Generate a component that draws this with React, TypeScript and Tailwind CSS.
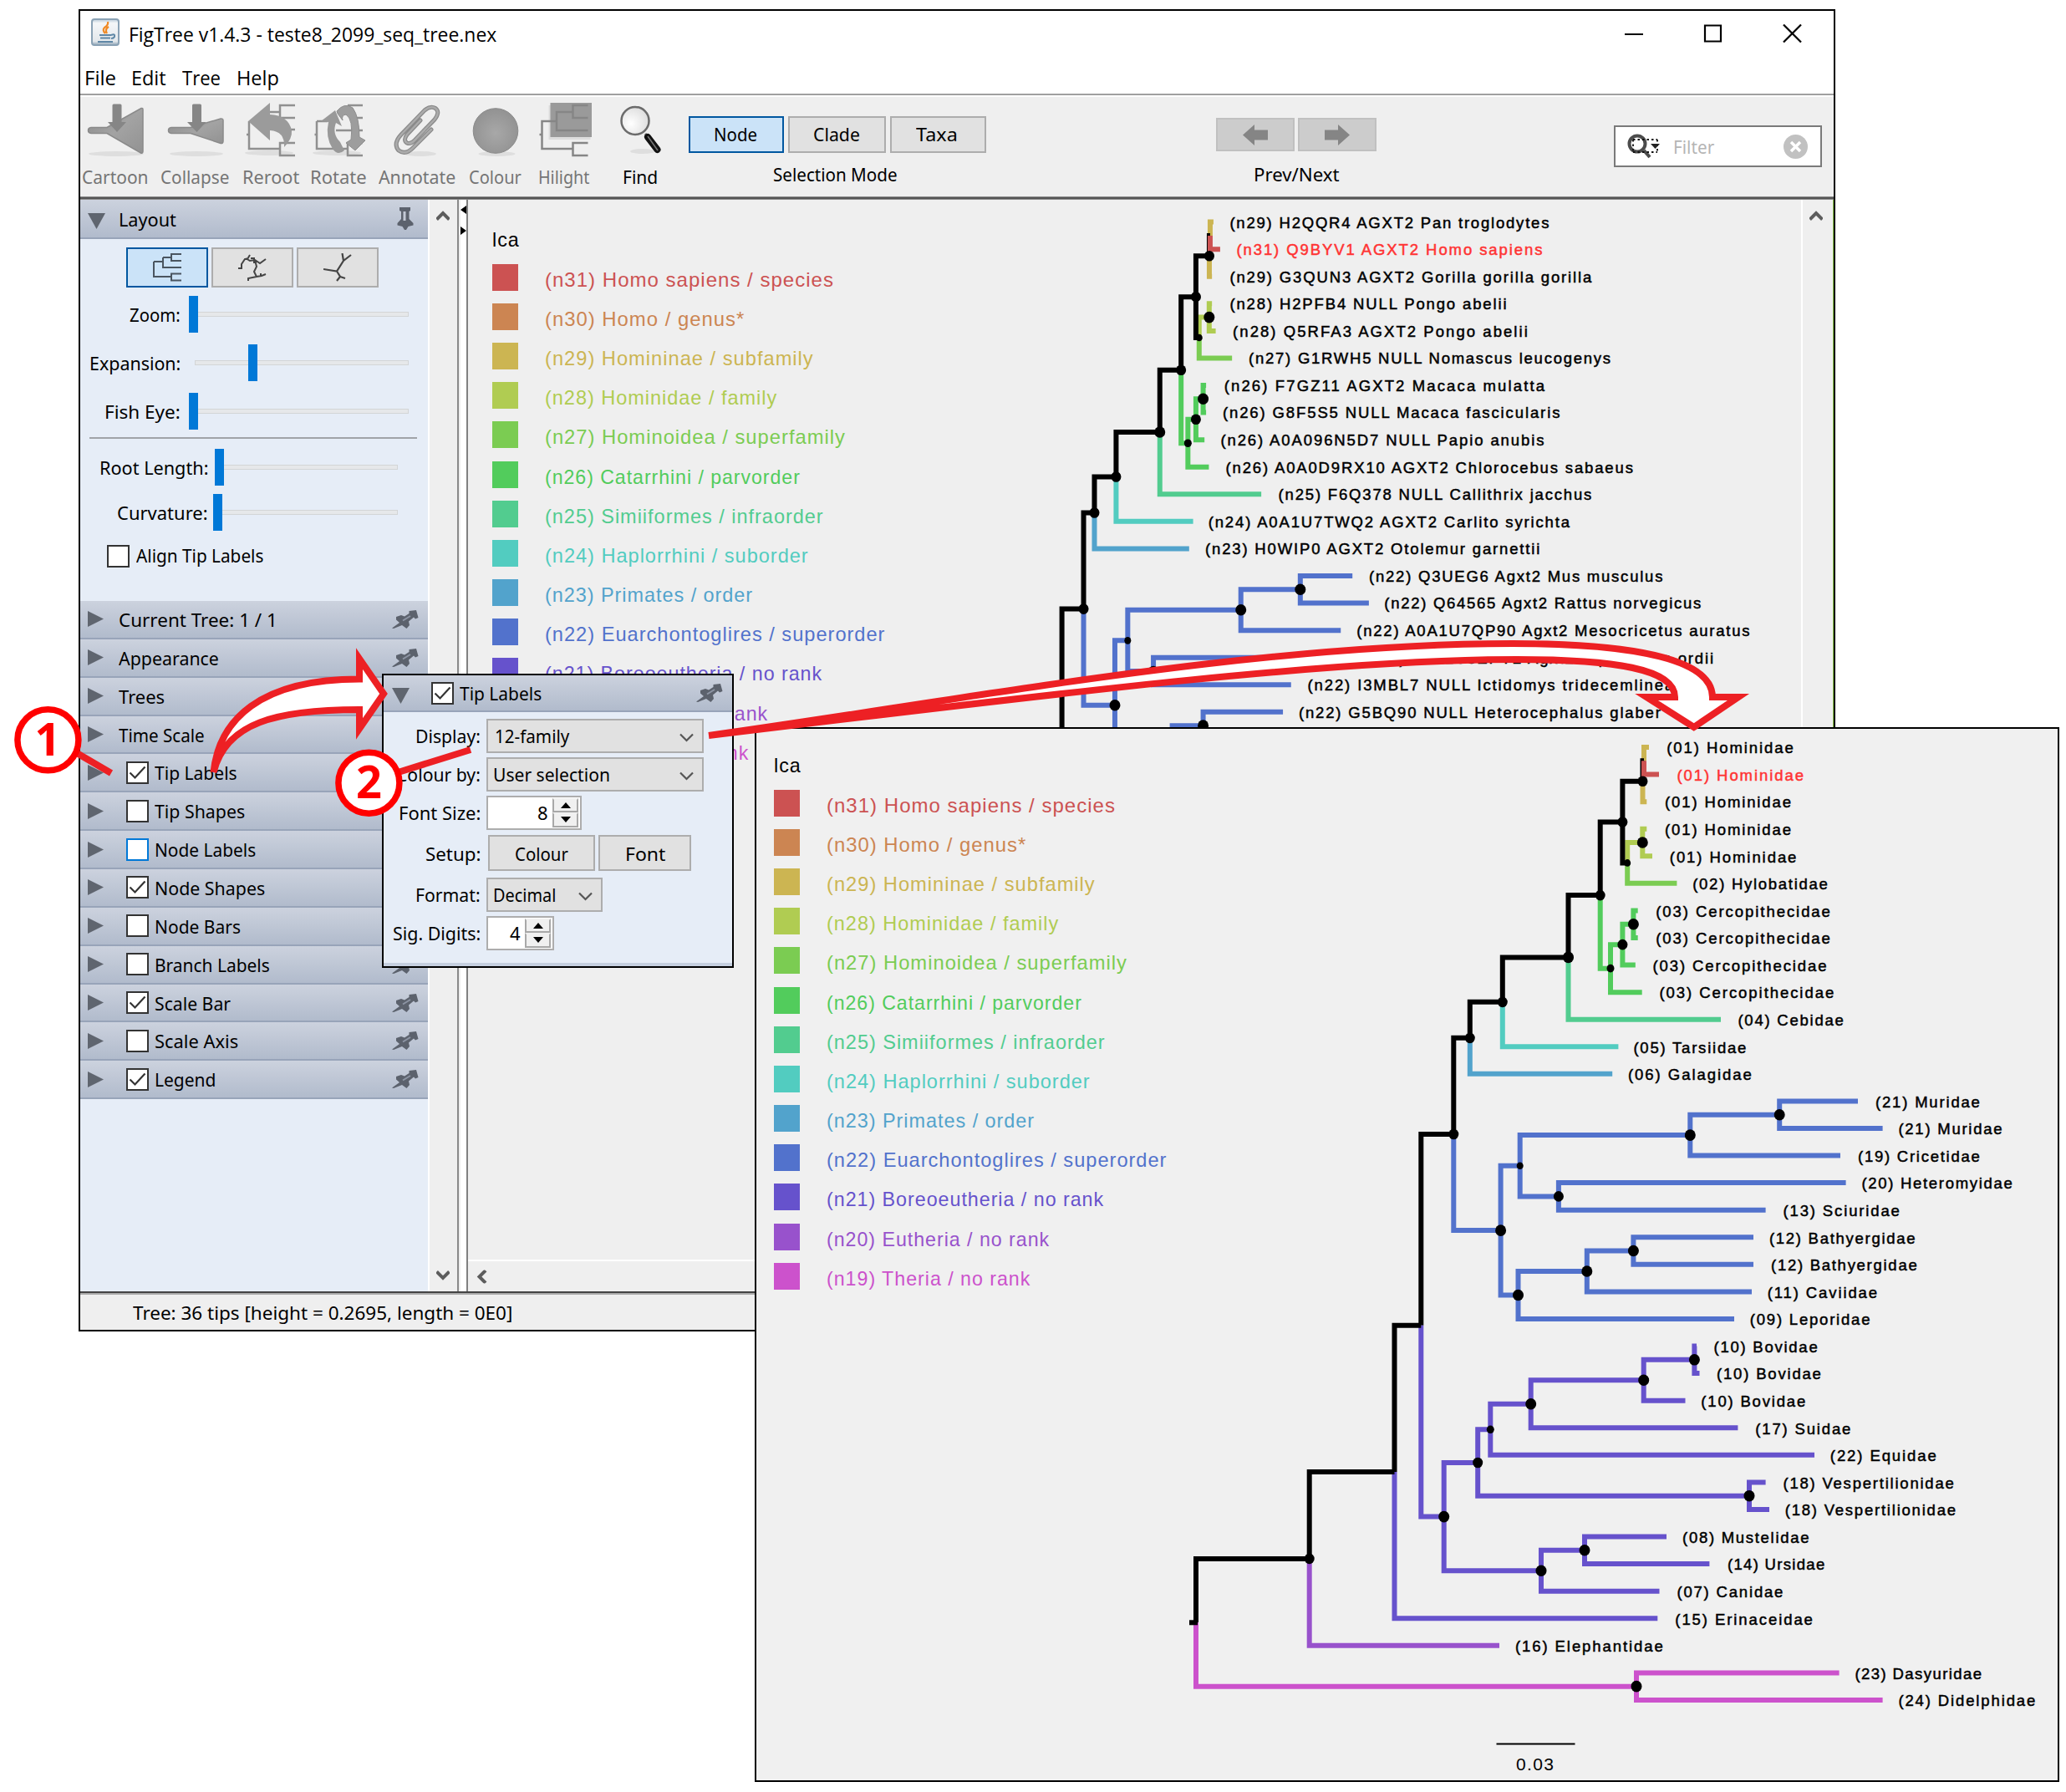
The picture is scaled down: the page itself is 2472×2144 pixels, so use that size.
import React, { useLayoutEffect, useRef, useState } from "react";

/* ---------- text squeezed or stretched to a given width ---------- */

function Fit({ w, className = "", children }: { w: number; className?: string; children: string }) {
  const ref = useRef<HTMLSpanElement>(null);
  const [scale, setScale] = useState(1);
  useLayoutEffect(() => {
    if (ref.current) setScale(w / ref.current.offsetWidth);
  }, [w]);
  return (
    <span className={"inline-block shrink-0 whitespace-nowrap text-left " + className} style={{ width: w }}>
      <span ref={ref} className="inline-block origin-left" style={{ transform: `scaleX(${scale})` }}>
        {children}
      </span>
    </span>
  );
}

/* ---------- phylogenetic tree ---------- */

const C: Record<string, string> = {
  n31: "#cc5252",
  n30: "#cc8552",
  n29: "#ccb552",
  n28: "#b0cc52",
  n27: "#7bcc52",
  n26: "#52cc5c",
  n25: "#52cc8f",
  n24: "#52ccc0",
  n23: "#52a3cc",
  n22: "#5272cc",
  n21: "#6652cc",
  n20: "#9852cc",
  n19: "#cc52cc",
};

type Tree = { x: number; c: string; r?: number; kids?: Tree[]; front?: boolean };
const tip = (c: string, x: number, front = false): Tree => ({ x, c: C[c], front });
const node = (c: string, x: number, r: number, ...kids: Tree[]): Tree => ({ x, c: C[c] ?? "#000", r, kids });

const TREE: Tree = node("k", 1431, 0,
  node("k", 1566.7, 6,
    node("k", 1668.5, 0,
      node("k", 1700.3, 0,
        node("k", 1739.3, 6,
          node("k", 1758.8, 6,
            node("k", 1797.8, 6,
              node("k", 1876.5, 6.5,
                node("k", 1914.7, 6,
                  node("k", 1941.4, 6,
                    node("k", 1965.5, 6,
                      node("k", 1967, 0, tip("n29", 1973), tip("n31", 1985, true)),
                      tip("n29", 1970.3)),
                    node("k", 1947.2, 4,
                      node("n28", 1965.3, 6.5, tip("n28", 1970.3), tip("n28", 1977)),
                      tip("n27", 2006.4))),
                  node("n26", 1927, 4.5,
                    node("n26", 1941.4, 6,
                      node("n26", 1954.4, 6.5, tip("n26", 1959.7), tip("n26", 1959.7)),
                      tip("n26", 1956.8)),
                    tip("n26", 1964.7))),
                tip("n25", 2059)),
              tip("n24", 1936.4)),
            tip("n23", 1929.2)),
          node("n22", 1795.6, 6.5,
            node("n22", 1818.7, 4,
              node("n22", 2022.3, 6.5,
                node("n22", 2129.2, 6.5, tip("n22", 2223), tip("n22", 2252.6)),
                tip("n22", 2202)),
              node("n22", 1864.9, 6, tip("n22", 2208.6), tip("n22", 2112.6))),
            node("n22", 1816.5, 6.5,
              node("n22", 1898.8, 6.5,
                node("n22", 1954.4, 6.5, tip("n22", 2098), tip("n22", 2098)),
                tip("n22", 2096)),
              tip("n22", 2075)))),
        node("n21", 1727.7, 6.5,
          node("n21", 1768.2, 6,
            node("n21", 1783.3, 4.5,
              node("n21", 1831.7, 6.5,
                node("n21", 1966.7, 6.5,
                  node("n21", 2027.4, 6.5, tip("n21", 2030), tip("n21", 2033.5)),
                  tip("n21", 2016.5)),
                tip("n21", 2079.4)),
              tip("n21", 2171)),
            node("n21", 2093, 6.5, tip("n21", 2112.6), tip("n21", 2117))),
          node("n21", 1844, 6.5,
            node("n21", 1896, 6.5, tip("n21", 1994), tip("n21", 2045.4)),
            tip("n21", 1985.5)))),
      tip("n21", 1983.3)),
    tip("n20", 1794)),
  node("n19", 1958, 6.5, tip("n19", 2200.6), tip("n19", 2252.6)));

const PITCH = 32.57;

/* Leaves are evenly spaced; an inner node sits midway between its children. */
function drawTree(y0: number, mapX: (x: number) => number) {
  let row = 0;
  const lines: React.ReactNode[] = [];
  const front: React.ReactNode[] = [];
  const dots: React.ReactNode[] = [];
  let key = 0;
  const walk = (t: Tree): number => {
    if (!t.kids) return y0 + PITCH * row++;
    const ys = t.kids.map(walk);
    const y = (ys[0] + ys[ys.length - 1]) / 2;
    const x = mapX(t.x);
    t.kids.forEach((k, i) => {
      (k.front ? front : lines).push(
        <path key={key++} d={`M${x} ${y}V${ys[i]}H${mapX(k.x)}`} fill="none" stroke={k.c} strokeWidth={6} />
      );
    });
    if (t.r) dots.push(<ellipse key={key++} cx={x} cy={y} rx={t.r} ry={t.r + 0.3} />);
    return y;
  };
  const rootY = walk(TREE);
  return (
    <g>
      {lines}
      {front}
      <rect x={mapX(TREE.x) - 8} y={rootY - 3} width={10} height={6} />
      {dots}
    </g>
  );
}

type Lbl = [string, number, number];

const FAMILIES: Lbl[] = [
  ["(01) Hominidae", 1994.2, 151.6], ["(01) Hominidae", 2006.4, 151.6], ["(01) Hominidae", 1992, 151],
  ["(01) Hominidae", 1992, 151], ["(01) Hominidae", 1997.8, 151.6], ["(02) Hylobatidae", 2025.2, 161.7],
  ["(03) Cercopithecidae", 1981.2, 208.7], ["(03) Cercopithecidae", 1981.2, 208.7], ["(03) Cercopithecidae", 1977.5, 208],
  ["(03) Cercopithecidae", 1985.5, 208.7], ["(04) Cebidae", 2079.4, 126.4], ["(05) Tarsiidae", 1954.4, 135],
  ["(06) Galagidae", 1947.9, 148], ["(21) Muridae", 2244, 124.9], ["(21) Muridae", 2271.4, 124.2],
  ["(19) Cricetidae", 2223, 145.8], ["(20) Heteromyidae", 2227.4, 180.5], ["(13) Sciuridae", 2133.5, 139.4],
  ["(12) Bathyergidae", 2116.9, 174.7], ["(12) Bathyergidae", 2119, 174.7], ["(11) Caviidae", 2114.7, 131.4],
  ["(09) Leporidae", 2093.8, 143.7], ["(10) Bovidae", 2050.5, 124.2], ["(10) Bovidae", 2054, 124.9],
  ["(10) Bovidae", 2035.3, 124.9], ["(17) Suidae", 2100.3, 114], ["(22) Equidae", 2189.8, 127],
  ["(18) Vespertilionidae", 2133.5, 204.3], ["(18) Vespertilionidae", 2135.7, 204.3], ["(08) Mustelidae", 2013, 151.6],
  ["(14) Ursidae", 2067, 116.2], ["(07) Canidae", 2006.4, 127], ["(15) Erinaceidae", 2004.3, 164.6],
  ["(16) Elephantidae", 1812.9, 176.9], ["(23) Dasyuridae", 2219.4, 151.6], ["(24) Didelphidae", 2271.4, 163.9],
];

const SEQUENCES: Lbl[] = [
  ["(n29) H2QQR4 AGXT2 Pan troglodytes", 1471.4, 382],
  ["(n31) Q9BYV1 AGXT2 Homo sapiens", 1479.4, 366.1],
  ["(n29) G3QUN3 AGXT2 Gorilla gorilla gorilla", 1471.4, 432.9],
  ["(n28) H2PFB4 NULL Pongo abelii", 1471.4, 331.2],
  ["(n28) Q5RFA3 AGXT2 Pongo abelii", 1475.1, 352.7],
  ["(n27) G1RWH5 NULL Nomascus leucogenys", 1494.1, 432.9],
  ["(n26) F7GZ11 AGXT2 Macaca mulatta", 1464.7, 383.3],
  ["(n26) G8F5S5 NULL Macaca fascicularis", 1462.9, 403.5],
  ["(n26) A0A096N5D7 NULL Papio anubis", 1460.4, 387],
  ["(n26) A0A0D9RX10 AGXT2 Chlorocebus sabaeus", 1466.5, 487.4],
  ["(n25) F6Q378 NULL Callithrix jacchus", 1529.6, 374.7],
  ["(n24) A0A1U7TWQ2 AGXT2 Carlito syrichta", 1445.7, 432.3],
  ["(n23) H0WIP0 AGXT2 Otolemur garnettii", 1442, 400.4],
  ["(n22) Q3UEG6 Agxt2 Mus musculus", 1638, 351.4],
  ["(n22) Q64565 Agxt2 Rattus norvegicus", 1656.3, 379],
  ["(n22) A0A1U7QP90 Agxt2 Mesocricetus auratus", 1623.3, 470.2],
  ["(n22) A0A1S3EPY2 Agxt2 Dipodomys ordii", 1630, 420],
  ["(n22) I3MBL7 NULL Ictidomys tridecemlineatus", 1564.5, 468],
  ["(n22) G5BQ90 NULL Heterocephalus glaber", 1554, 432.9],
];

function TipLabels({ rows, y0 }: { rows: Lbl[]; y0: number }) {
  return (
    <g className="font-['Liberation_Sans',Arial,sans-serif] text-[18.5px]">
      {rows.map(([s, x, w], i) => (
        <text key={i} x={x} y={Math.round(y0 + PITCH * i)} textLength={w} fill={i === 1 ? "#ff3333" : "#000"}
          stroke={i === 1 ? "#ff3333" : "#000"} strokeWidth={0.5}>
          {s}
        </text>
      ))}
    </g>
  );
}

const LEGEND: [string, string, number][] = [
  ["n31", "(n31) Homo sapiens / species", 345.5],
  ["n30", "(n30) Homo / genus*", 238.8],
  ["n29", "(n29) Homininae / subfamily", 321.9],
  ["n28", "(n28) Hominidae / family", 278.1],
  ["n27", "(n27) Hominoidea / superfamily", 359.4],
  ["n26", "(n26) Catarrhini / parvorder", 305.4],
  ["n25", "(n25) Simiiformes / infraorder", 333.9],
  ["n24", "(n24) Haplorrhini / suborder", 315.2],
  ["n23", "(n23) Primates / order", 248.7],
  ["n22", "(n22) Euarchontoglires / superorder", 407.6],
  ["n21", "(n21) Boreoeutheria / no rank", 332.6],
  ["n20", "(n20) Eutheria / no rank", 267],
  ["n19", "(n19) Theria / no rank", 244],
];

function LegendList() {
  return (
    <div className="flex flex-col font-['Liberation_Sans',Arial,sans-serif] text-[24px] leading-[28px] tracking-[1px]">
      <Fit w={33} className="mb-[7px]">lca</Fit>
      {LEGEND.map(([k, s, w]) => (
        <div key={k} className="flex h-[47.2px] items-center gap-8" style={{ color: C[k] }}>
          <span className="h-8 w-[31px] bg-current" />
          <Fit w={w} className="translate-y-[3px]">{s}</Fit>
        </div>
      ))}
    </div>
  );
}

/* ---------- small glyphs ---------- */

const Pin = () => (
  <svg className="h-[22px] w-8 shrink-0" viewBox="0 0 32 22">
    <path d="M0 21.500 9 15 5 11.500V8L11 6 15 7.500 20.500 4V1L29 0 31.500 9 28 10.500 26 8.500 20 13.500 21 18 17.500 22 12 18 2 22Z" fill="#5c626d" />
    <path d="M13 12.500 22 7" stroke="#8d95a4" strokeWidth="2" />
  </svg>
);

const PinUp = () => (
  <svg className="h-[27px] w-5 shrink-0" viewBox="0 0 20 27">
    <path d="M3 0H16V4L14.500 5V14L19.500 19V21.500L13.500 23 11 27H9L6.500 23 0.500 21.500V19L5 14V5L3 4Z" fill="#5c626d" />
    <path d="M9 5V16" stroke="#c3c9d5" strokeWidth="3" />
  </svg>
);

const Tri = ({ down = false }: { down?: boolean }) =>
  down ? (
    <svg className="h-[19px] w-[21px] shrink-0 translate-y-[3px]" viewBox="0 0 21 19"><path d="M0 0H21L10.500 19Z" fill="#5f656f" /></svg>
  ) : (
    <svg className="h-[19px] w-[19px] shrink-0" viewBox="0 0 19 19"><path d="M0 0 19 9.500 0 19Z" fill="#5f656f" /></svg>
  );

function Check({ on = false, blue = false }: { on?: boolean; blue?: boolean }) {
  return (
    <span className={"flex size-[27px] shrink-0 items-center justify-center border-2 bg-white " + (blue ? "border-[#0078d7]" : "border-[#333]")}>
      {on && (
        <svg className="size-[21px]" viewBox="0 0 21 21">
          <path d="M1.500 10.500 7.500 16.500 19.500 3.500" fill="none" stroke="#333" strokeWidth="2.200" />
        </svg>
      )}
    </span>
  );
}

const Chevron = ({ className = "" }: { className?: string }) => (
  <svg className={"h-[13px] w-4 shrink-0 " + className} viewBox="0 0 16 13">
    <path d="M0.500 10.500 8 3 15.500 10.500" fill="none" stroke="#5d5d5d" strokeWidth="4" />
  </svg>
);

/* ---------- toolbar ---------- */

function ToolIcon({ cx, children }: { cx: number; children: React.ReactNode }) {
  return (
    <svg className="h-[72px] w-[76px] shrink-0" viewBox={`${cx - 38} 120 76 72`}>
      <defs>
        <linearGradient id="gFunnel" x1="0" y1="0" x2="1" y2="1">
          <stop offset="0" stopColor="#888" /><stop offset="0.500" stopColor="#a3a3a3" /><stop offset="1" stopColor="#929292" />
        </linearGradient>
        <radialGradient id="gBall" cx="0.500" cy="0.550" r="0.550">
          <stop offset="0" stopColor="#a8a8a8" /><stop offset="1" stopColor="#929292" />
        </radialGradient>
        <radialGradient id="gLens" cx="0.350" cy="0.600" r="0.700">
          <stop offset="0" stopColor="#fff" /><stop offset="1" stopColor="#dcdcdc" />
        </radialGradient>
      </defs>
      {children}
    </svg>
  );
}

const Shade = ({ x, w, y = 184 }: { x: number; w: number; y?: number }) => (
  <ellipse cx={x + w / 2} cy={y} rx={w / 2} ry={3} fill="#dedede" />
);

const TOOLS: { label: string; cx: number; w: number; gap: string; icon: React.ReactNode; active?: boolean }[] = [
  {
    label: "Cartoon", cx: 138, w: 80, gap: "ml-[2px]",
    icon: (
      <>
        <Shade x={106} w={66} />
        <path d="M109 152.500H128L169 129.500Q171 129 171 131V181Q171 184 168.500 183L128 159.500H109Q105.500 159 105.500 156T109 152.500Z" fill="url(#gFunnel)" stroke="#8a8a8a" strokeWidth="1.500" />
        <path d="M134.500 126Q134.500 124.500 136 124.500H144Q145.500 124.500 145.500 126V146H151L140 158 129 146H134.500Z" fill="#868686" />
      </>
    ),
  },
  {
    label: "Collapse", cx: 233, w: 82, gap: "ml-[14px]",
    icon: (
      <>
        <Shade x={203} w={64} />
        <path d="M205 152.500H228L264 142Q267 141.500 267 144V169Q267 172 264 171.500L228 159.500H205Q201.500 159 201.500 156T205 152.500Z" fill="url(#gFunnel)" stroke="#8a8a8a" strokeWidth="1.500" />
        <path d="M230 126Q230 124.500 231.500 124.500H239.500Q241 124.500 241 126V146H246.500L235.500 158 224 146H230Z" fill="#868686" />
      </>
    ),
  },
  {
    label: "Reroot", cx: 324, w: 68, gap: "ml-[16px]",
    icon: (
      <>
        <Shade x={293} w={58} y={183} />
        <path d="M295 161H298M353 126H335V141H353M322 134H335M298 145V178H335M353 171H335V186H353M340 155H353" fill="none" stroke="#909090" strokeWidth="2.500" />
        <path d="M297 145 323 123V137Q345 138 349 156 350 166 340 176 341 157 323 156V168Z" fill="#9b9b9b" />
      </>
    ),
  },
  {
    label: "Rotate", cx: 405, w: 68, gap: "ml-[13px]",
    icon: (
      <>
        <Shade x={374} w={58} y={183} />
        <path d="M376.500 161H379M434 126H416M379 145V178H416M379 145H392M434 171H416V186H434M402 156H434M424 141H434" fill="none" stroke="#909090" strokeWidth="2.500" />
        <path d="M384 145 401 132 409 151 402 147Q397 160 407 170L412 180Q404 187 398 178 389 164 393 146Z" fill="#999" />
        <path d="M403 133Q412 122 422 129 430 140 430 164L437 168 425 180 414 171 420 167Q423 143 414 137 408 138 410 144L404 136Z" fill="#9d9d9d" stroke="#8d8d8d" />
      </>
    ),
  },
  {
    label: "Annotate", cx: 499, w: 92, gap: "ml-[14px]",
    icon: (
      <>
        <Shade x={484} w={38} />
        <path d="M503 144 487 161Q482 168 487 171 491 173 496 168L520 143Q527 134 521 129.500 515 126 508 132L480 161Q470 172 477 180 485 186 494 177L516 155" fill="none" stroke="#8a8a8a" strokeWidth="5" strokeLinecap="round" />
        <path d="M503 144 487 161Q482 168 487 171 491 173 496 168L520 143Q527 134 521 129.500 515 126 508 132L480 161Q470 172 477 180 485 186 494 177L516 155" fill="none" stroke="#ababab" strokeWidth="2.500" strokeLinecap="round" />
      </>
    ),
  },
  {
    label: "Colour", cx: 592.5, w: 63, gap: "ml-[16px]",
    icon: (
      <>
        <Shade x={572} w={44} />
        <circle cx={592.5} cy={156.5} r={26.8} fill="url(#gBall)" stroke="#8b8b8b" strokeWidth="1" />
      </>
    ),
  },
  {
    label: "Hilight", cx: 674.5, w: 61, gap: "ml-[20px]",
    icon: (
      <>
        <rect x={656} y={126} width={50} height={41} fill="#ddd" />
        <rect x={658} y={123} width={49.500} height={41} fill="#9a9a9a" />
        <path d="M645 161H648M684 134H665.500V156H703M703 126H685V141H703M665.500 145H648V178H685M703 171H685V186H703" fill="none" stroke="#868686" strokeWidth="2.500" />
      </>
    ),
  },
  {
    label: "Find", cx: 767, w: 42, gap: "ml-[40px]", active: true,
    icon: (
      <>
        <Shade x={755} w={30} y={181} />
        <path d="M773 160 778 166" stroke="#666" strokeWidth="3" />
        <path d="M776 164 787.500 179" stroke="#111" strokeWidth="8" strokeLinecap="round" />
        <path d="M776 163 788 180" stroke="#777" strokeWidth="1.500" />
        <circle cx={761} cy={144.500} r={16.500} fill="url(#gLens)" stroke="#6b6b6b" strokeWidth="2.500" />
      </>
    ),
  },
];

function Toolbar() {
  return (
    <div className="flex h-[119px] shrink-0 items-start bg-[#efefef] pt-1 text-[22px] leading-[28px]">
      {TOOLS.map((t) => (
        <div key={t.label} className={"flex shrink-0 flex-col items-center " + t.gap} style={{ width: t.w }}>
          <ToolIcon cx={t.cx}>{t.icon}</ToolIcon>
          <Fit w={t.w} className={"mt-[5px] " + (t.active ? "text-black" : "text-[#757575]")}>{t.label}</Fit>
        </div>
      ))}
      <div className="ml-[37px] mt-[19px] flex w-[356px] shrink-0 flex-col items-center">
        <div className="flex w-full gap-[5px]">
          <span className="flex h-[44px] w-[114px] items-center justify-center border-2 border-[#0057a0] bg-[#cbe3f8] pb-[2px] pr-[2px]"><Fit w={52}>Node</Fit></span>
          <span className="flex h-[44px] w-[118px] items-center justify-center border-2 border-[#adadad] bg-[#e1e1e1] pb-[2px] pr-[2px]"><Fit w={56}>Clade</Fit></span>
          <span className="flex h-[44px] w-[115px] items-center justify-center border-2 border-[#adadad] bg-[#e1e1e1] pb-[2px] pr-[3px]"><Fit w={50}>Taxa</Fit></span>
        </div>
        <Fit w={149} className="mt-[11px] -translate-x-[3px]">Selection Mode</Fit>
      </div>
      <div className="ml-[275px] mt-[21px] flex w-[192px] shrink-0 flex-col items-center">
        <div className="flex w-full gap-[4px]">
          {[false, true].map((r) => (
            <span key={String(r)} className="flex h-10 w-[94px] items-center justify-center border-2 border-[#c0c0c0] bg-[#cccccc]">
              <svg className={"h-[25px] w-[30px] " + (r ? "-scale-x-100" : "")} viewBox="0 0 30 25">
                <path d="M0 12.500 14 0V6.500H30V18.500H14V25Z" fill="#858585" />
              </svg>
            </span>
          ))}
        </div>
        <Fit w={103} className="mt-[13px]">Prev/Next</Fit>
      </div>
      <div className="ml-[284px] mt-[30px] flex h-[50px] w-[249px] shrink-0 items-center border-2 border-[#7a7a7a] bg-white pl-[14px] pr-[15px]">
        <svg className="h-[30px] w-[40px]" viewBox="0 0 40 30">
          <circle cx="12" cy="12" r="9.500" fill="none" stroke="#4c4c4c" strokeWidth="4" />
          <path d="M20 20 27 28" stroke="#4c4c4c" strokeWidth="4" />
          <path d="M7 7H36M7 22H36M7 7V22M36 7V22" fill="none" stroke="#111" strokeWidth="1.800" strokeDasharray="2.500 3" />
          <path d="M28 12H39L33.500 18Z" fill="#222" />
        </svg>
        <Fit w={49} className="ml-[15px] text-[#b5b5b5]">Filter</Fit>
        <svg className="ml-auto size-[29px]" viewBox="0 0 29 29">
          <circle cx="14.500" cy="14.500" r="14.500" fill="#c1c1c1" />
          <path d="M9 9 20 20M20 9 9 20" stroke="#fff" strokeWidth="3.500" />
        </svg>
      </div>
    </div>
  );
}

/* ---------- sidebar ---------- */

const HEADER = "flex items-center border-b-2 border-[#98a4b9] bg-linear-to-b from-[#ccd2de] to-[#b1bbcc]";

function Slider({ label, lw, lx, thumb, start, end, h }: { label: string; lw: number; lx: number; thumb: number; start: number; end: number; h: string }) {
  return (
    <div className={"relative flex items-center " + h}>
      <span className="flex shrink-0 justify-end" style={{ width: lx }}><Fit w={lw}>{label}</Fit></span>
      <span className="h-[6px] border-[1.5px] border-[#d3d5d6] bg-[#e6e8ea]" style={{ marginLeft: start - lx, width: end - start }} />
      <span className="absolute h-[44px] w-[11px] bg-[#0078d7]" style={{ left: thumb }} />
    </div>
  );
}

const SECTIONS: { t: string; w: number; cb?: "on" | "off" | "blue" }[] = [
  { t: "Current Tree: 1 / 1", w: 190 },
  { t: "Appearance", w: 119.5 },
  { t: "Trees", w: 55 },
  { t: "Time Scale", w: 103 },
  { t: "Tip Labels", w: 98.5, cb: "on" },
  { t: "Tip Shapes", w: 108.5, cb: "off" },
  { t: "Node Labels", w: 121.5, cb: "blue" },
  { t: "Node Shapes", w: 132, cb: "on" },
  { t: "Node Bars", w: 103, cb: "off" },
  { t: "Branch Labels", w: 138, cb: "off" },
  { t: "Scale Bar", w: 91.5, cb: "on" },
  { t: "Scale Axis", w: 100.5, cb: "off" },
  { t: "Legend", w: 73.5, cb: "on" },
];

function Sidebar() {
  return (
    <div className="flex w-[416px] shrink-0 flex-col bg-[#e6edf7] text-[22px] leading-[28px]">
      <div className={HEADER + " h-[47px] shrink-0 pl-[9px] pr-[17px]"}>
        <Tri down />
        <Fit w={69} className="ml-[16px]">Layout</Fit>
        <span className="ml-auto"><PinUp /></span>
      </div>
      <div className="flex h-[433px] shrink-0 flex-col pt-[10px]">
        <div className="flex gap-[4px] pl-[55px]">
          <span className="flex h-12 w-[98px] items-center justify-center border-2 border-[#0057a0] bg-[#cbe3f8]">
            <svg className="h-[34px] w-[34px]" viewBox="0 0 34 34">
              <path d="M1 10V28H22M1 10H12M12 5V17H34M12 5H22M34 1H22V9H34M34 24.500H22V32.500H34" fill="none" stroke="#4a5560" strokeWidth="2" />
            </svg>
          </span>
          <span className="flex h-12 w-[98px] items-center justify-center border-2 border-[#adadad] bg-[#e1e1e1]">
            <svg className="h-[34px] w-[34px]" viewBox="0 0 34 34">
              <path d="M0 18H4V13L8 7H11L14 2M9 6 14 9 20 8 26 12 33 7M20 8 22 16 19 22 22 28 12 30V33M22 28 28 27 33 25M15 6H19V12M27 24V28" fill="none" stroke="#444" strokeWidth="2" />
            </svg>
          </span>
          <span className="flex h-12 w-[98px] items-center justify-center border-2 border-[#adadad] bg-[#e1e1e1]">
            <svg className="h-[34px] w-[34px]" viewBox="0 0 34 34">
              <path d="M0 19 16 21.500 24 9 33 2M24 9 22.500 0M16 21.500 20 28 16 33M20 28 26 30" fill="none" stroke="#444" strokeWidth="2.200" />
            </svg>
          </span>
        </div>
        <Slider h="h-[63px]" label="Zoom:" lw={61} lx={120} thumb={130} start={137} end={393} />
        <Slider h="h-[54px]" label="Expansion:" lw={109} lx={120} thumb={201} start={137} end={393} />
        <Slider h="h-[62px]" label="Fish Eye:" lw={91} lx={120} thumb={130} start={137} end={393} />
        <div className="ml-[11px] h-[2px] w-[392px] shrink-0 bg-[#a0a3a8]" />
        <Slider h="h-[68px]" label="Root Length:" lw={130} lx={153} thumb={161} start={166} end={380} />
        <Slider h="h-[40px]" label="Curvature:" lw={109} lx={153} thumb={159} start={166} end={380} />
        <div className="flex h-[64px] items-center gap-[8px] pl-[32px]">
          <Check />
          <Fit w={152} className="-translate-y-px">Align Tip Labels</Fit>
        </div>
      </div>
      {SECTIONS.map((s) => (
        <div key={s.t} className={HEADER + " h-[45.870px] shrink-0 pl-[9px] pr-[11px]"}>
          <Tri />
          {s.cb ? (
            <span className="ml-[27px] flex items-center gap-[7px]">
              <Check on={s.cb === "on"} blue={s.cb === "blue"} />
              <Fit w={s.w}>{s.t}</Fit>
            </span>
          ) : (
            <Fit w={s.w} className="ml-[18px]">{s.t}</Fit>
          )}
          <span className="ml-auto"><Pin /></span>
        </div>
      ))}
    </div>
  );
}

/* ---------- main window ---------- */

function MainWindow() {
  return (
    <div className="absolute left-[94px] top-[11px] flex h-[1582px] w-[2102px] flex-col overflow-hidden border-2 border-black bg-white">
      <div className="flex h-[50px] shrink-0 items-center pl-[13px]">
        <svg className="h-[33px] w-[34px]" viewBox="0 0 34 33">
          <defs>
            <linearGradient id="gJava" x1="0" y1="0" x2="0" y2="1">
              <stop offset="0" stopColor="#b8cad8" /><stop offset="0.150" stopColor="#f4f6f8" /><stop offset="0.850" stopColor="#e3e8ec" /><stop offset="1" stopColor="#8ba1b3" />
            </linearGradient>
          </defs>
          <rect x="1" y="1" width="32" height="31" rx="3" fill="url(#gJava)" stroke="#8aa2b5" strokeWidth="2" />
          <path d="M20 4Q21 8 16 11 13 14 17 18M21 10Q16 13 19 18" fill="none" stroke="#f08a24" strokeWidth="2.200" />
          <path d="M10 20H24M24 20Q29 18 28 22 27 24 24 24M11 23.500H23M8 28H26" fill="none" stroke="#5f87a6" strokeWidth="2" />
        </svg>
        <Fit w={440} className="ml-[11px] translate-y-[3px] font-['Open_Sans','Noto_Sans',sans-serif] text-[24px] leading-[32px]">
          FigTree v1.4.3 - teste8_2099_seq_tree.nex
        </Fit>
        <svg className="ml-auto mr-[38px] h-[22px] w-[212px] translate-y-[2px]" viewBox="0 0 212 22">
          <path d="M0 12H22M96 1.500H115V20.500H96ZM190 0.500 211 21.500M211 0.500 190 21.500" fill="none" stroke="#000" strokeWidth="2.200" />
        </svg>
      </div>
      <div className="flex h-[49px] shrink-0 items-center pl-[5px] pt-[10px] font-['Open_Sans','Noto_Sans',sans-serif] text-[24px] leading-[32px]">
        <Fit w={38}>File</Fit>
        <Fit w={42} className="ml-[18px]">Edit</Fit>
        <Fit w={46} className="ml-[19px]">Tree</Fit>
        <Fit w={51} className="ml-[19px]">Help</Fit>
      </div>
      <div className="h-[2px] shrink-0 bg-[#a0a0a0]" />
      <div className="h-[2px] shrink-0 bg-white" />
      <Toolbar />
      <div className="h-1 shrink-0 border-y border-[#8a8a8a] bg-[#555]" />
      <div className="flex h-[1306px] shrink-0 bg-[#efefef]">
        <Sidebar />
        <div className="flex w-[35px] shrink-0 flex-col items-center justify-between border-l-2 border-white py-[13px] pr-[2px]">
          <Chevron />
          <Chevron className="rotate-180" />
        </div>
        <div className="w-[2px] shrink-0 bg-[#8a8a8a]" />
        <div className="w-[2px] shrink-0 bg-[#efefef]" />
        <div className="w-[7px] shrink-0 bg-white pt-[7px]">
          <svg className="h-[36px] w-[7px]" viewBox="0 0 7 36"><path d="M7 0V10L0 5ZM0 25 7 30 0 35Z" /></svg>
        </div>
        <div className="w-[2px] shrink-0 bg-[#808080]" />
        <div className="relative flex min-w-0 flex-1 flex-col overflow-hidden">
          <div className="flex min-h-0 flex-1">
            <div className="flex-1 pl-[29px] pt-[34px]"><LegendList /></div>
            <div className="flex w-[38px] justify-center border-l-2 border-white pr-[4px] pt-[13px]"><Chevron /></div>
          </div>
          <div className="flex h-[38px] shrink-0 items-center border-t-2 border-white pl-[9px]"><Chevron className="-rotate-90" /></div>
          <svg className="absolute left-0 top-0 h-[1306px] w-[1634px]" viewBox="560 239 1634 1306">
            {drawTree(265.6, (x) => 1270.6 + (x - 1700.3) * 0.665)}
            <TipLabels rows={SEQUENCES} y0={272.5} />
          </svg>
        </div>
        <div className="w-px shrink-0 bg-[#8bc34a]" />
      </div>
      <div className="h-1 shrink-0 border-b-2 border-[#aaa] bg-[#444]" />
      <div className="flex flex-1 items-center bg-[#efefef] pl-[63px] text-[22px] leading-[28px]">
        <Fit w={454}>Tree: 36 tips [height = 0.2695, length = 0E0]</Fit>
      </div>
    </div>
  );
}

/* ---------- tip label settings ---------- */

function Row({ label, lw, h, children }: { label: string; lw: number; h: string; children: React.ReactNode }) {
  return (
    <div className={"flex items-center " + h}>
      <span className="mr-[7px] flex w-[116px] shrink-0 justify-end"><Fit w={lw}>{label}</Fit></span>
      {children}
    </div>
  );
}

function Select({ text, w, cls }: { text: string; w: number; cls: string }) {
  return (
    <span className={"flex h-[41px] items-center justify-between border-2 border-[#adadad] bg-[#e1e1e1] pr-[10px] " + cls}>
      <Fit w={w}>{text}</Fit>
      <svg className="mt-1 h-[11px] w-[17px]" viewBox="0 0 17 11"><path d="M1 1.500 8.500 9 16 1.500" fill="none" stroke="#555" strokeWidth="2.200" /></svg>
    </span>
  );
}

function Spinner({ v, cls }: { v: string; cls: string }) {
  return (
    <span className={"flex h-[41px] items-center justify-end border-2 border-[#adadad] bg-white pr-[2px] " + cls}>
      <Fit w={13} className="mr-[5px]">{v}</Fit>
      <span className="flex h-[35px] w-[31px] flex-col">
        {[false, true].map((d) => (
          <span key={String(d)} className="flex flex-1 items-center justify-center border-2 border-[#a8a8a8] border-t-[#f0f0f0] bg-[#f0f0f0]">
            <svg className={"h-[7px] w-[12px] " + (d ? "rotate-180" : "")} viewBox="0 0 12 7"><path d="M0 7 6 0 12 7Z" /></svg>
          </span>
        ))}
      </span>
    </span>
  );
}

const BTN = "flex h-[43px] items-center justify-center border-2 border-[#adadad] bg-[#e1e1e1] ";

function TipLabelPopup() {
  return (
    <div className="absolute left-[457px] top-[806px] flex h-[352px] w-[421px] flex-col border-2 border-black bg-[#e6edf7] text-[22px] leading-[28px]">
      <div className={HEADER + " h-[44px] shrink-0 pl-[10px] pr-[11px]"}>
        <Tri down />
        <span className="ml-[26px] flex items-center gap-[7px]"><Check on /><Fit w={98}>Tip Labels</Fit></span>
        <span className="ml-auto"><Pin /></span>
      </div>
      <div className="flex flex-1 flex-col border-b-4 border-[#c5cfdf] pt-[5px]">
        <Row label="Display:" lw={78} h="h-[46px]"><Select text="12-family" w={89} cls="w-[260px] pl-[8px]" /></Row>
        <Row label="Colour by:" lw={101} h="h-[46px]"><Select text="User selection" w={140} cls="w-[260px] pl-[6px]" /></Row>
        <Row label="Font Size:" lw={98} h="h-[46px]"><Spinner v="8" cls="w-[114px]" /></Row>
        <Row label="Setup:" lw={66} h="h-[51px]">
          <span className={BTN + "ml-[2px] w-[128px]"}><Fit w={64}>Colour</Fit></span>
          <span className={BTN + "ml-[4px] w-[111px]"}><Fit w={48}>Font</Fit></span>
        </Row>
        <Row label="Format:" lw={78} h="h-[48px]"><Select text="Decimal" w={75} cls="w-[139px] pl-[6px]" /></Row>
        <Row label="Sig. Digits:" lw={105} h="h-[44px]"><Spinner v="4" cls="w-[81px]" /></Row>
      </div>
    </div>
  );
}

/* ---------- second tree, labelled by family ---------- */

function FamilyPanel() {
  return (
    <div className="absolute left-[903px] top-[870px] h-[1262px] w-[1561px] overflow-hidden border-2 border-black bg-[#f0f0f0] pl-[20.5px] pt-[30px]">
      <LegendList />
      <svg className="absolute left-0 top-0 h-[1258px] w-[1557px]" viewBox="905 872 1557 1258">
        {drawTree(894, (x) => x)}
        <TipLabels rows={FAMILIES} y0={901.3} />
        <path d="M1790.500 2086.500H1884.500" stroke="#000" strokeWidth={2} />
        <text x={1814} y={2118} textLength={45} className="font-['Liberation_Sans',Arial,sans-serif] text-[21px]">0.03</text>
      </svg>
    </div>
  );
}

/* ---------- numbered callouts and arrows ---------- */

function Callouts() {
  return (
    <svg className="absolute left-0 top-0 h-[2144px] w-[2472px]" viewBox="0 0 2472 2144">
      <g fill="#fff" stroke="#ed2024" strokeWidth={8} strokeMiterlimit={10}>
        <path d="M255.500 924C262 862 310 812.500 430 812.500V788L459 830 430 872V849C330 849 270 865 255.500 924" />
        <path d="M848 880C1150 838 1500 770 1810 770 1960 770 2049 790 2049 834H2080L2026.700 870 1970 834H2004C2004 800 1930 789 1815 789 1600 789 1300 825 848 880" />
        <path d="M92 901 133 925M470 926 563 897" />
      </g>
      <g fill="#fff" stroke="#ff0000" strokeWidth={7.5}>
        <circle cx={57.4} cy={885.3} r={36.5} />
        <circle cx={441.4} cy={936.7} r={36.5} />
      </g>
      <g className="font-['Open_Sans','Noto_Sans',sans-serif] text-[54px] font-bold" fill="#ff0000" textAnchor="middle">
        <text x={57} y={903.5}>1</text>
        <text x={441.5} y={955}>2</text>
      </g>
    </svg>
  );
}

export default function App() {
  return (
    <div className="relative h-[2144px] w-[2472px] overflow-hidden bg-white font-['Noto_Sans','Open_Sans',sans-serif] text-black">
      <MainWindow />
      <TipLabelPopup />
      <FamilyPanel />
      <Callouts />
    </div>
  );
}
